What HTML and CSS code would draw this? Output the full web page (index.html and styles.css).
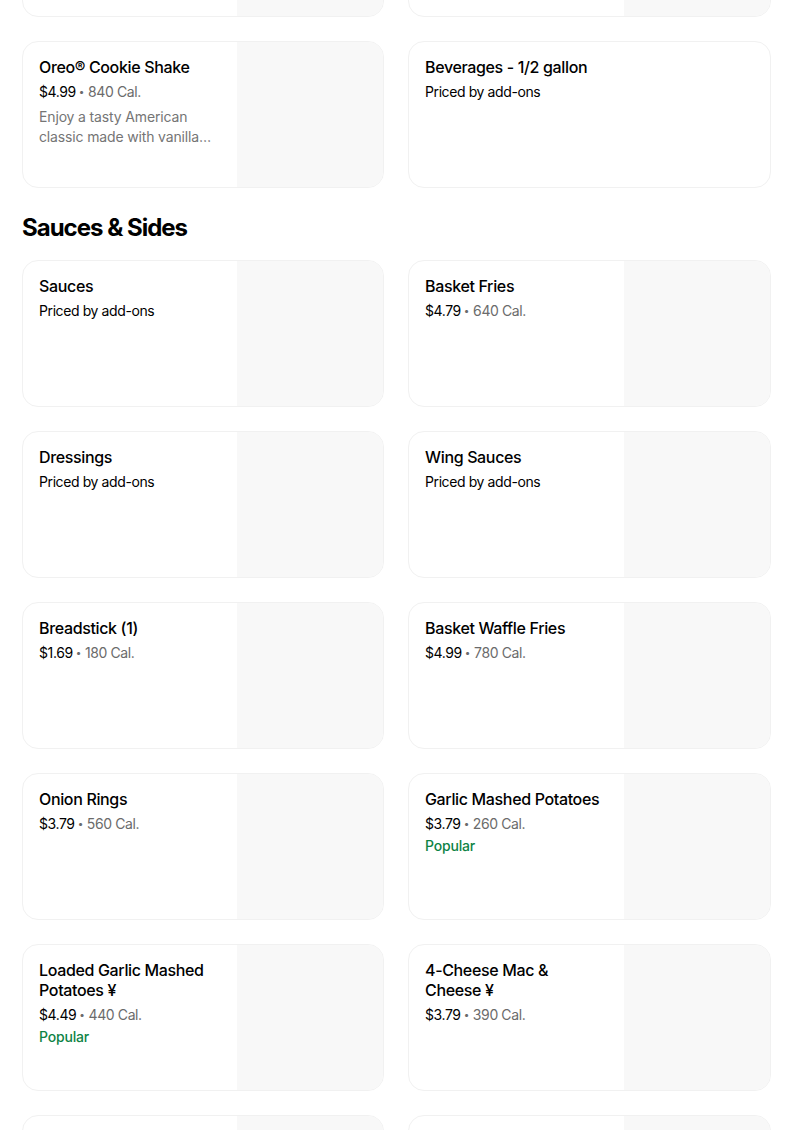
FILE: index.html
```html
<!DOCTYPE html>
<html>
<head>
<meta charset="utf-8">
<link rel="stylesheet" href="styles.css">
</head>
<body>
<main class="menu">
  <section class="grid">
    <div class="card"><div class="info"></div><div class="pic"></div></div>
    <div class="card"><div class="info"></div><div class="pic"></div></div>
    <div class="card">
      <div class="info">
        <div class="title">Oreo® Cookie Shake</div>
        <div class="meta"><span class="price">$4.99</span><span class="dot">•</span>840 Cal.</div>
        <div class="desc">Enjoy a tasty American classic made with vanilla…</div>
      </div>
      <div class="pic"></div>
    </div>
    <div class="card">
      <div class="info">
        <div class="title">Beverages - 1/2 gallon</div>
        <div class="meta"><span class="price">Priced by add-ons</span></div>
      </div>
    </div>
  </section>

  <h2 class="section-title">Sauces &amp; Sides</h2>

  <section class="grid">
    <div class="card">
      <div class="info">
        <div class="title">Sauces</div>
        <div class="meta"><span class="price">Priced by add-ons</span></div>
      </div>
      <div class="pic"></div>
    </div>
    <div class="card">
      <div class="info">
        <div class="title">Basket Fries</div>
        <div class="meta"><span class="price">$4.79</span><span class="dot">•</span>640 Cal.</div>
      </div>
      <div class="pic"></div>
    </div>
    <div class="card">
      <div class="info">
        <div class="title">Dressings</div>
        <div class="meta"><span class="price">Priced by add-ons</span></div>
      </div>
      <div class="pic"></div>
    </div>
    <div class="card">
      <div class="info">
        <div class="title">Wing Sauces</div>
        <div class="meta"><span class="price">Priced by add-ons</span></div>
      </div>
      <div class="pic"></div>
    </div>
    <div class="card">
      <div class="info">
        <div class="title">Breadstick (1)</div>
        <div class="meta"><span class="price">$1.69</span><span class="dot">•</span>180 Cal.</div>
      </div>
      <div class="pic"></div>
    </div>
    <div class="card">
      <div class="info">
        <div class="title">Basket Waffle Fries</div>
        <div class="meta"><span class="price">$4.99</span><span class="dot">•</span>780 Cal.</div>
      </div>
      <div class="pic"></div>
    </div>
    <div class="card">
      <div class="info">
        <div class="title">Onion Rings</div>
        <div class="meta"><span class="price">$3.79</span><span class="dot">•</span>560 Cal.</div>
      </div>
      <div class="pic"></div>
    </div>
    <div class="card">
      <div class="info">
        <div class="title">Garlic Mashed Potatoes</div>
        <div class="meta"><span class="price">$3.79</span><span class="dot">•</span>260 Cal.</div>
        <div class="popular">Popular</div>
      </div>
      <div class="pic"></div>
    </div>
    <div class="card">
      <div class="info">
        <div class="title">Loaded Garlic Mashed Potatoes ¥</div>
        <div class="meta"><span class="price">$4.49</span><span class="dot">•</span>440 Cal.</div>
        <div class="popular">Popular</div>
      </div>
      <div class="pic"></div>
    </div>
    <div class="card">
      <div class="info">
        <div class="title">4-Cheese Mac &amp; Cheese ¥</div>
        <div class="meta"><span class="price">$3.79</span><span class="dot">•</span>390 Cal.</div>
      </div>
      <div class="pic"></div>
    </div>
    <div class="card"><div class="info"></div><div class="pic"></div></div>
    <div class="card"><div class="info"></div><div class="pic"></div></div>
  </section>
</main>
</body>
</html>
```

FILE: styles.css
```css
html, body {
  margin: 0;
  padding: 0;
  background: #ffffff;
  overflow: hidden;
}
body {
  font-family: Inter, "Noto Sans", Arial, sans-serif;
  color: #000000;
}
.menu {
  width: 749px;
  margin-left: 22px;
  margin-top: -130px;
}
.grid {
  display: grid;
  grid-template-columns: 362px 363px;
  column-gap: 24px;
  row-gap: 24px;
}
.card {
  display: flex;
  height: 147px;
  box-sizing: border-box;
  border: 1px solid #f1f1f1;
  border-radius: 16px;
  overflow: hidden;
  background: #ffffff;
}
.info {
  flex: 1;
  min-width: 0;
  padding: 15px 16px 16px 16px;
}
.pic {
  width: 146px;
  flex: none;
  background: #f8f8f8;
}
.title {
  font-size: 16px;
  line-height: 20px;
  font-weight: 500;
  letter-spacing: -0.35px;
  color: #000000;
}
.meta {
  margin-top: 5px;
  font-size: 14px;
  line-height: 20px;
  color: #6b6b6b;
  letter-spacing: -0.4px;
}
.price {
  color: #000000;
}
.dot {
  display: inline-block;
  margin: 0 4px 0 3px;
  font-size: 10px;
  line-height: 10px;
  vertical-align: 2px;
  color: #6b6b6b;
}
.desc {
  margin-top: 5px;
  font-size: 14px;
  line-height: 20px;
  color: #757575;
  letter-spacing: -0.15px;
  display: -webkit-box;
  -webkit-line-clamp: 2;
  -webkit-box-orient: vertical;
  overflow: hidden;
}
.popular {
  margin-top: 2px;
  font-size: 14px;
  line-height: 20px;
  font-weight: 500;
  letter-spacing: -0.2px;
  color: #0e8345;
}
.section-title {
  margin: 24px 0 16px 0;
  font-size: 24px;
  line-height: 32px;
  font-weight: 700;
  letter-spacing: -1px;
}
```
